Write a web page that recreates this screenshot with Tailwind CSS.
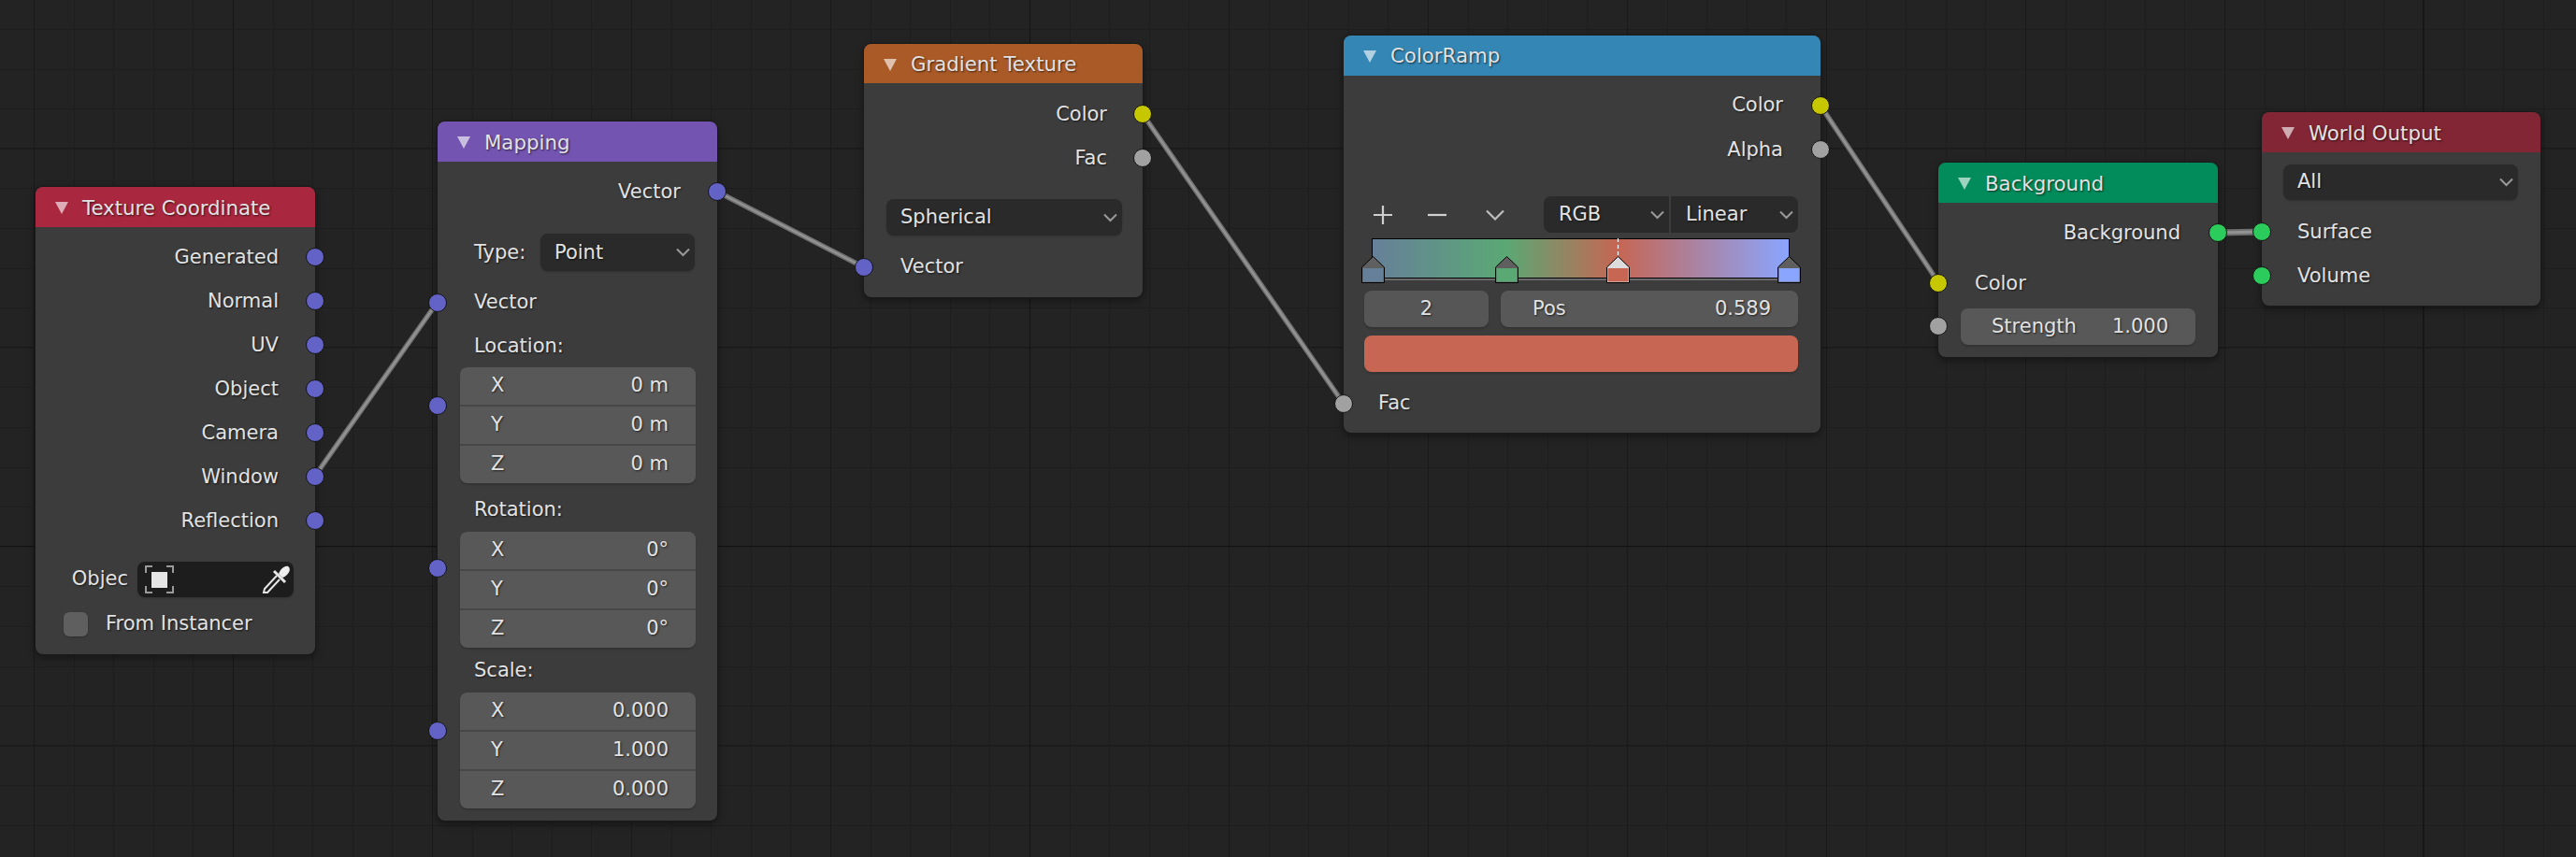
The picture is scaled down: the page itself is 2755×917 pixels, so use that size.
<!DOCTYPE html>
<html>
<head>
<meta charset="utf-8">
<script src="https://cdn.jsdelivr.net/npm/@tailwindcss/browser@4"></script>
</head>
<body class="bg-[#232323]">
<div class="relative w-[2755px] h-[917px] overflow-hidden text-[21px] text-[#e2e2e2] [font-family:'DejaVu_Sans',sans-serif] [text-shadow:1px_1px_2px_rgba(0,0,0,0.65)] bg-[#232323] bg-[linear-gradient(90deg,transparent_249px,#161616_249px,#161616_250px,transparent_250px,transparent_1101px,#141414_1101px,#141414_1102px,transparent_1102px,transparent_2591px,#141414_2591px,#141414_2592px,transparent_2592px),linear-gradient(180deg,transparent_584px,#131313_584px,#131313_585px,transparent_585px),repeating-linear-gradient(90deg,transparent_0,transparent_36px,#1a1a1a_36px,#1a1a1a_37px,transparent_37px,transparent_213px),repeating-linear-gradient(180deg,transparent_0,transparent_158px,#1a1a1a_158px,#1a1a1a_159px,transparent_159px,transparent_213px),repeating-linear-gradient(90deg,transparent_0,transparent_36px,#1e1e1e_36px,#1e1e1e_37px,transparent_37px,transparent_42.6px),repeating-linear-gradient(180deg,transparent_0,transparent_31px,#1e1e1e_31px,#1e1e1e_32px,transparent_32px,transparent_42.6px)]">

  <!-- wires -->
  <svg class="absolute left-0 top-0" width="2755" height="917" fill="none">
    <g stroke="#707070" stroke-width="5.5">
      <line x1="337" y1="509" x2="468" y2="323"/>
      <line x1="767" y1="205" x2="924" y2="286"/>
      <line x1="1222" y1="122" x2="1437" y2="432"/>
      <line x1="1947" y1="113" x2="2073" y2="302"/>
      <line x1="2372" y1="249" x2="2419" y2="248" stroke-width="7"/>
    </g>
    <g stroke="#929292" stroke-width="2.5">
      <line x1="337" y1="509" x2="468" y2="323"/>
      <line x1="767" y1="205" x2="924" y2="286"/>
      <line x1="1222" y1="122" x2="1437" y2="432"/>
      <line x1="1947" y1="113" x2="2073" y2="302"/>
      <line x1="2372" y1="249" x2="2419" y2="248" stroke-width="3"/>
    </g>
  </svg>

  <!-- Texture Coordinate -->
  <div class="absolute left-[38px] top-[200px] w-[299px] rounded-[8px] bg-[#3e3e3e]/95 shadow-[0_0_0_1px_#1a1a1a,0_3px_8px_rgba(0,0,0,0.45)]">
    <div class="flex h-[43px] items-center rounded-t-[8px] bg-[#a9273f] pl-[21px] text-[21.3px]">
      <svg width="14" height="13" class="mr-[15px] mt-[2px]"><polygon points="0,0 14,0 7,13" fill="#fff" fill-opacity="0.62"/></svg>
      <span class="pt-[2px]">Texture Coordinate</span>
    </div>
    <div class="pt-[8px] pb-[19px]">
      <div class="relative flex h-[47px] items-center justify-end pr-[39px] pt-[2px]">Generated<span class="absolute right-[-10px] top-[14px] size-[20px] rounded-full border border-[#141414] bg-[#6363c7]"></span></div>
      <div class="relative flex h-[47px] items-center justify-end pr-[39px] pt-[2px]">Normal<span class="absolute right-[-10px] top-[14px] size-[20px] rounded-full border border-[#141414] bg-[#6363c7]"></span></div>
      <div class="relative flex h-[47px] items-center justify-end pr-[39px] pt-[2px]">UV<span class="absolute right-[-10px] top-[14px] size-[20px] rounded-full border border-[#141414] bg-[#6363c7]"></span></div>
      <div class="relative flex h-[47px] items-center justify-end pr-[39px] pt-[2px]">Object<span class="absolute right-[-10px] top-[14px] size-[20px] rounded-full border border-[#141414] bg-[#6363c7]"></span></div>
      <div class="relative flex h-[47px] items-center justify-end pr-[39px] pt-[2px]">Camera<span class="absolute right-[-10px] top-[14px] size-[20px] rounded-full border border-[#141414] bg-[#6363c7]"></span></div>
      <div class="relative flex h-[47px] items-center justify-end pr-[39px] pt-[2px]">Window<span class="absolute right-[-10px] top-[14px] size-[20px] rounded-full border border-[#141414] bg-[#6363c7]"></span></div>
      <div class="relative flex h-[47px] items-center justify-end pr-[39px] pt-[2px]">Reflection<span class="absolute right-[-10px] top-[14px] size-[20px] rounded-full border border-[#141414] bg-[#6363c7]"></span></div>
      <div class="mt-[21px] flex h-[38px] items-center justify-end gap-[10px] pr-[23px]">
        <span>Objec</span>
        <div class="flex h-[38px] w-[167px] items-center justify-between rounded-[8px] bg-[#1d1d1d] pl-[8px] pr-[3px] shadow-[0_1px_2px_rgba(0,0,0,0.2)]">
          <svg width="31" height="30" fill="none" stroke="#9a9a9a" stroke-width="2">
            <path d="M8 1H1V8M23 1H30V8M8 29H1V22M23 29H30V22"/>
            <rect x="7" y="7" width="17" height="17" fill="#e6e6e6" stroke="none"/>
          </svg>
          <svg width="31" height="30" fill="none">
            <path d="M16 11L3 25L2 29L6 29L19 15" stroke="#e6e6e6" stroke-width="2"/>
            <path d="M13 6L25 18" stroke="#e6e6e6" stroke-width="3"/>
            <path d="M18 9C20 4 24 0 28 1C31 3 30 7 27 10C25 12 23 13 22 13Z" fill="#ededed"/>
          </svg>
        </div>
      </div>
      <div class="mt-[16px] flex h-[26px] items-center gap-[19px] pl-[30px]">
        <span class="size-[26px] rounded-[6px] bg-[#5f5f5f] shadow-[0_1px_2px_rgba(0,0,0,0.25)]"></span>
        <span>From Instancer</span>
      </div>
    </div>
  </div>

  <!-- Mapping -->
  <div class="absolute left-[468px] top-[130px] w-[299px] rounded-[8px] bg-[#3e3e3e]/95 shadow-[0_0_0_1px_#1a1a1a,0_3px_8px_rgba(0,0,0,0.45)]">
    <div class="flex h-[43px] items-center rounded-t-[8px] bg-[#7354b0] pl-[21px] text-[21.3px]">
      <svg width="14" height="13" class="mr-[15px] mt-[2px]"><polygon points="0,0 14,0 7,13" fill="#fff" fill-opacity="0.62"/></svg>
      <span class="pt-[2px]">Mapping</span>
    </div>
    <div class="pt-[8px] pb-[13px]">
      <div class="relative flex h-[47px] items-center justify-end pr-[39px] pt-[3px]">Vector<span class="absolute right-[-10px] top-[14px] size-[20px] rounded-full border border-[#141414] bg-[#6363c7]"></span></div>
      <div class="mt-[22px] flex h-[40px] items-center justify-between pl-[39px] pr-[24px]">
        <span class="pt-[1px]">Type:</span>
        <div class="flex h-[40px] w-[165px] items-center justify-between rounded-[8px] bg-[#2a2a2a] pl-[15px] pr-[5px] shadow-[0_1px_2px_rgba(0,0,0,0.2)]">
          <span class="pt-[1px]">Point</span>
          <svg width="15" height="10" fill="none" stroke="#999" stroke-width="2"><path d="M1 1.5L7.5 8L14 1.5"/></svg>
        </div>
      </div>
      <div class="relative mt-[10px] flex h-[47px] items-center pl-[39px]">Vector<span class="absolute left-[-10px] top-[14px] size-[20px] rounded-full border border-[#141414] bg-[#6363c7]"></span></div>
      <div class="flex h-[46px] items-center pl-[39px] pt-[1px]">Location:</div>
      <div class="relative ml-[24px] w-[252px] rounded-[8px] shadow-[0_2px_2px_rgba(0,0,0,0.15)]">
        <span class="absolute left-[-34px] top-[31px] size-[20px] rounded-full border border-[#141414] bg-[#6363c7]"></span>
        <div class="flex flex-col gap-[2px] overflow-hidden rounded-[8px] bg-[#474747]">
          <div class="flex h-[40px] items-center justify-between bg-[#585858] pl-[33px] pr-[29px]"><span>X</span><span>0 m</span></div>
          <div class="flex h-[40px] items-center justify-between bg-[#585858] pl-[33px] pr-[29px]"><span>Y</span><span>0 m</span></div>
          <div class="flex h-[40px] items-center justify-between bg-[#585858] pl-[33px] pr-[29px]"><span>Z</span><span>0 m</span></div>
        </div>
      </div>
      <div class="mt-[6px] flex h-[46px] items-center pl-[39px]">Rotation:</div>
      <div class="relative ml-[24px] w-[252px] rounded-[8px] shadow-[0_2px_2px_rgba(0,0,0,0.15)]">
        <span class="absolute left-[-34px] top-[29px] size-[20px] rounded-full border border-[#141414] bg-[#6363c7]"></span>
        <div class="flex flex-col gap-[2px] overflow-hidden rounded-[8px] bg-[#474747]">
          <div class="flex h-[40px] items-center justify-between bg-[#585858] pl-[33px] pr-[29px]"><span>X</span><span>0°</span></div>
          <div class="flex h-[40px] items-center justify-between bg-[#585858] pl-[33px] pr-[29px]"><span>Y</span><span>0°</span></div>
          <div class="flex h-[40px] items-center justify-between bg-[#585858] pl-[33px] pr-[29px]"><span>Z</span><span>0°</span></div>
        </div>
      </div>
      <div class="mt-[2px] flex h-[46px] items-center pl-[39px]">Scale:</div>
      <div class="relative ml-[24px] w-[252px] rounded-[8px] shadow-[0_2px_2px_rgba(0,0,0,0.15)]">
        <span class="absolute left-[-34px] top-[31px] size-[20px] rounded-full border border-[#141414] bg-[#6363c7]"></span>
        <div class="flex flex-col gap-[2px] overflow-hidden rounded-[8px] bg-[#474747]">
          <div class="flex h-[40px] items-center justify-between bg-[#585858] pl-[33px] pr-[29px]"><span>X</span><span>0.000</span></div>
          <div class="flex h-[40px] items-center justify-between bg-[#585858] pl-[33px] pr-[29px]"><span>Y</span><span>1.000</span></div>
          <div class="flex h-[40px] items-center justify-between bg-[#585858] pl-[33px] pr-[29px]"><span>Z</span><span>0.000</span></div>
        </div>
      </div>
    </div>
  </div>

  <!-- Gradient Texture -->
  <div class="absolute left-[924px] top-[47px] w-[298px] rounded-[8px] bg-[#3e3e3e]/95 shadow-[0_0_0_1px_#1a1a1a,0_3px_8px_rgba(0,0,0,0.45)]">
    <div class="flex h-[42px] items-center rounded-t-[8px] bg-[#a95a27] pl-[21px] text-[21.3px]">
      <svg width="14" height="13" class="mr-[15px] mt-[2px]"><polygon points="0,0 14,0 7,13" fill="#fff" fill-opacity="0.62"/></svg>
      <span class="pt-[2px]">Gradient Texture</span>
    </div>
    <div class="pt-[9px] pb-[9px]">
      <div class="relative flex h-[47px] items-center justify-end pr-[38px] pt-[2px]">Color<span class="absolute right-[-10px] top-[14px] size-[20px] rounded-full border border-[#141414] bg-[#c7c700]"></span></div>
      <div class="relative flex h-[47px] items-center justify-end pr-[38px] pt-[2px]">Fac<span class="absolute right-[-10px] top-[14px] size-[20px] rounded-full border border-[#141414] bg-[#a1a1a1]"></span></div>
      <div class="ml-[24px] mt-[21px] flex h-[39px] w-[252px] items-center justify-between rounded-[8px] bg-[#2a2a2a] pl-[15px] pr-[5px] shadow-[0_1px_2px_rgba(0,0,0,0.2)]">
        <span class="pt-[1px]">Spherical</span>
        <svg width="15" height="10" fill="none" stroke="#999" stroke-width="2"><path d="M1 1.5L7.5 8L14 1.5"/></svg>
      </div>
      <div class="relative mt-[10px] flex h-[47px] items-center pl-[39px]">Vector<span class="absolute left-[-10px] top-[14px] size-[20px] rounded-full border border-[#141414] bg-[#6363c7]"></span></div>
    </div>
  </div>

  <!-- ColorRamp -->
  <div class="absolute left-[1437px] top-[38px] w-[510px] rounded-[8px] bg-[#3e3e3e]/95 shadow-[0_0_0_1px_#1a1a1a,0_3px_8px_rgba(0,0,0,0.45)]">
    <div class="flex h-[43px] items-center rounded-t-[8px] bg-[#3486b5] pl-[21px] text-[21.3px]">
      <svg width="14" height="13" class="mr-[15px] mt-[2px]"><polygon points="0,0 14,0 7,13" fill="#fff" fill-opacity="0.62"/></svg>
      <span class="pt-[1px]">ColorRamp</span>
    </div>
    <div class="pt-[8px] pb-[8px]">
      <div class="relative flex h-[47px] items-center justify-end pr-[40px] pt-[1px]">Color<span class="absolute right-[-10px] top-[14px] size-[20px] rounded-full border border-[#141414] bg-[#c7c700]"></span></div>
      <div class="relative flex h-[47px] items-center justify-end pr-[40px] pt-[2px]">Alpha<span class="absolute right-[-10px] top-[14px] size-[20px] rounded-full border border-[#141414] bg-[#a1a1a1]"></span></div>
      <div class="ml-[22px] mt-[27px] flex h-[39px] w-[464px] items-center">
        <span class="flex w-[40px] justify-center"><svg width="20" height="20" stroke="#cfcfcf" stroke-width="2.2"><path d="M0 10H20M10 0V20"/></svg></span>
        <span class="ml-[18px] flex w-[40px] justify-center"><svg width="20" height="20" stroke="#cfcfcf" stroke-width="2.2"><path d="M0 10H20"/></svg></span>
        <span class="ml-[22px] flex w-[40px] justify-center"><svg width="20" height="12" fill="none" stroke="#bdbdbd" stroke-width="2.2"><path d="M1 1.5L10 10.5L19 1.5"/></svg></span>
        <div class="ml-auto flex h-[39px] w-[272px] gap-[2px]">
          <div class="flex w-[134px] items-center justify-between rounded-l-[8px] bg-[#2a2a2a] pl-[16px] pr-[5px]">
            <span class="pt-[1px]">RGB</span>
            <svg width="15" height="10" fill="none" stroke="#999" stroke-width="2"><path d="M1 1.5L7.5 8L14 1.5"/></svg>
          </div>
          <div class="flex w-[136px] items-center justify-between rounded-r-[8px] bg-[#2a2a2a] pl-[16px] pr-[5px]">
            <span class="pt-[1px]">Linear</span>
            <svg width="15" height="10" fill="none" stroke="#999" stroke-width="2"><path d="M1 1.5L7.5 8L14 1.5"/></svg>
          </div>
        </div>
      </div>
      <div class="relative ml-[30px] mt-[6px] h-[43px] w-[447px] border border-black bg-[linear-gradient(90deg,#668099_0%,#5aa874_32%,#c66653_58.9%,#8aa5ff_100%)] shadow-[0_2px_0_#6a6a6a]">
        <svg class="absolute left-[-12px] top-[18px]" width="25" height="29"><polygon points="12.5,0.5 24.5,12 24.5,28.5 0.5,28.5 0.5,12" fill="#5f5f5f" stroke="#000"/><rect x="1.5" y="13" width="22" height="14.5" fill="#668099"/></svg>
        <svg class="absolute left-[131px] top-[18px]" width="25" height="29"><polygon points="12.5,0.5 24.5,12 24.5,28.5 0.5,28.5 0.5,12" fill="#5f5f5f" stroke="#000"/><rect x="1.5" y="13" width="22" height="14.5" fill="#5aa874"/></svg>
        <svg class="absolute left-[250px] top-[-1px]" width="25" height="48"><path d="M12.5 0V19" stroke="#fff" stroke-width="1.2" stroke-dasharray="4 3"/><polygon points="12.5,19.5 24.5,31 24.5,47.5 0.5,47.5 0.5,31" fill="#dcdcdc" stroke="#000"/><rect x="1.5" y="32" width="22" height="14.5" fill="#c66653"/></svg>
        <svg class="absolute left-[433px] top-[18px]" width="25" height="29"><polygon points="12.5,0.5 24.5,12 24.5,28.5 0.5,28.5 0.5,12" fill="#5f5f5f" stroke="#000"/><rect x="1.5" y="13" width="22" height="14.5" fill="#8aa5ff"/></svg>
      </div>
      <div class="ml-[22px] mt-[13px] flex h-[39px] w-[464px] gap-[13px]">
        <div class="flex w-[133px] items-center justify-center rounded-[8px] bg-[#565656] shadow-[0_2px_2px_rgba(0,0,0,0.15)]">2</div>
        <div class="flex w-[318px] items-center justify-between rounded-[8px] bg-[#585858] pl-[34px] pr-[29px] shadow-[0_2px_2px_rgba(0,0,0,0.15)]"><span>Pos</span><span>0.589</span></div>
      </div>
      <div class="ml-[22px] mt-[9px] h-[39px] w-[464px] rounded-[8px] bg-[#c66653] shadow-[0_2px_2px_rgba(0,0,0,0.15)]"></div>
      <div class="relative mt-[10px] flex h-[47px] items-center pl-[37px]">Fac<span class="absolute left-[-10px] top-[14px] size-[20px] rounded-full border border-[#141414] bg-[#a1a1a1]"></span></div>
    </div>
  </div>

  <!-- Background -->
  <div class="absolute left-[2073px] top-[174px] w-[299px] rounded-[8px] bg-[#3e3e3e]/95 shadow-[0_0_0_1px_#1a1a1a,0_3px_8px_rgba(0,0,0,0.45)]">
    <div class="flex h-[43px] items-center rounded-t-[8px] bg-[#028b5b] pl-[21px] text-[21.3px]">
      <svg width="14" height="13" class="mr-[15px] mt-[2px]"><polygon points="0,0 14,0 7,13" fill="#fff" fill-opacity="0.62"/></svg>
      <span class="pt-[2px]">Background</span>
    </div>
    <div class="pt-[8px] pb-[13px]">
      <div class="relative flex h-[47px] items-center justify-end pr-[40px] pt-[3px]">Background<span class="absolute right-[-10px] top-[14px] size-[20px] rounded-full border border-[#141414] bg-[#2bcb5c]"></span></div>
      <div class="relative mt-[7px] flex h-[47px] items-center pl-[39px] pt-[2px]">Color<span class="absolute left-[-10px] top-[14px] size-[20px] rounded-full border border-[#141414] bg-[#c7c700]"></span></div>
      <div class="relative ml-[24px] mt-[4px] flex h-[39px] w-[251px] items-center justify-between rounded-[8px] bg-[#585858] pl-[33px] pr-[29px] shadow-[0_2px_2px_rgba(0,0,0,0.15)]">
        <span class="absolute left-[-34px] top-[9px] size-[20px] rounded-full border border-[#141414] bg-[#a1a1a1]"></span>
        <span>Strength</span><span>1.000</span>
      </div>
    </div>
  </div>

  <!-- World Output -->
  <div class="absolute left-[2419px] top-[120px] w-[298px] rounded-[8px] bg-[#3e3e3e]/95 shadow-[0_0_0_1px_#1a1a1a,0_3px_8px_rgba(0,0,0,0.45)]">
    <div class="flex h-[43px] items-center rounded-t-[8px] bg-[#822534] pl-[21px] text-[21.3px]">
      <svg width="14" height="13" class="mr-[15px] mt-[2px]"><polygon points="0,0 14,0 7,13" fill="#fff" fill-opacity="0.62"/></svg>
      <span class="pt-[2px]">World Output</span>
    </div>
    <div class="pt-[13px] pb-[9px]">
      <div class="ml-[23px] flex h-[38px] w-[251px] items-center justify-between rounded-[8px] bg-[#2a2a2a] pl-[15px] pr-[5px] shadow-[0_1px_2px_rgba(0,0,0,0.2)]">
        <span>All</span>
        <svg width="15" height="10" fill="none" stroke="#999" stroke-width="2"><path d="M1 1.5L7.5 8L14 1.5"/></svg>
      </div>
      <div class="relative mt-[10px] flex h-[47px] items-center pl-[38px] pt-[3px]">Surface<span class="absolute left-[-10px] top-[14px] size-[20px] rounded-full border border-[#141414] bg-[#2bcb5c]"></span></div>
      <div class="relative flex h-[47px] items-center pl-[38px] pt-[2px]">Volume<span class="absolute left-[-10px] top-[14px] size-[20px] rounded-full border border-[#141414] bg-[#2bcb5c]"></span></div>
    </div>
  </div>
</div>
</body>
</html>
